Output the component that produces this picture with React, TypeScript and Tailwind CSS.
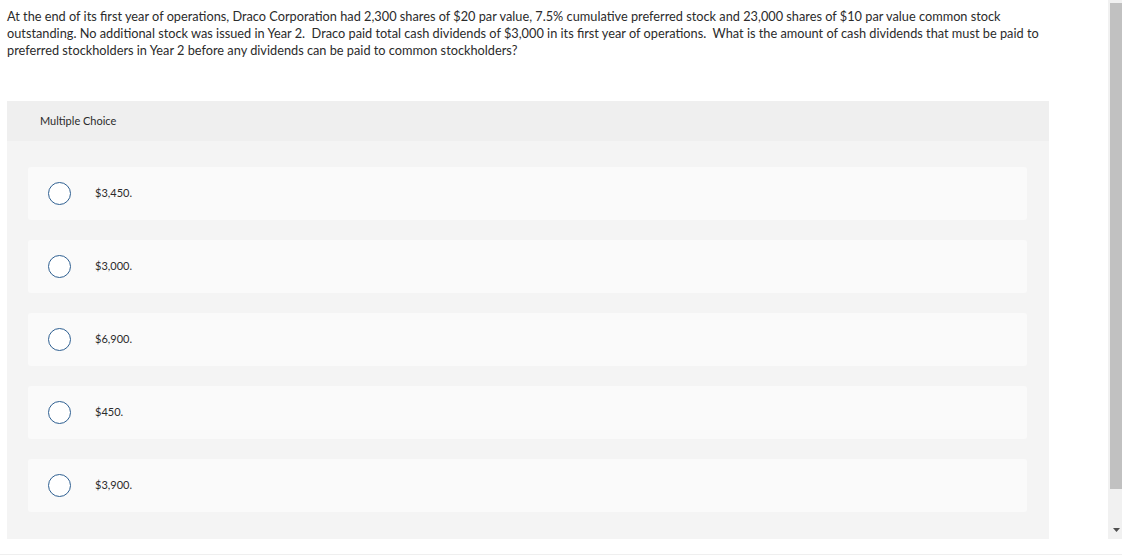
const options = ["$3,450.", "$3,000.", "$6,900.", "$450.", "$3,900."];

function Radio() {
  return <span className="block h-[23px] w-[23px] shrink-0 rounded-full border-[1.5px] border-[#2e5f91] bg-white" />;
}

export default function App() {
  return (
    <div className="h-[558px] w-[1122px] overflow-hidden bg-white font-['Lato','Liberation_Sans',sans-serif] text-[#2b2b2b]">
      <div className="flex h-[539px]">
        <main className="flex-1 pl-[7px] pt-[8px]">
          <p className="whitespace-nowrap text-[12.75px] leading-[17px]">
            At the end of its first year of operations, Draco Corporation had 2,300 shares of $20 par value, 7.5% cumulative preferred stock and 23,000 shares of $10 par value common stock
            <br />
            outstanding. No additional stock was issued in Year 2.&nbsp; Draco paid total cash dividends of $3,000 in its first year of operations.&nbsp; What is the amount of cash dividends that must be paid to
            <br />
            preferred stockholders in Year 2 before any dividends can be paid to common stockholders?
          </p>

          <section className="mt-[42px] w-[1042px]">
            <div className="flex h-[40px] items-center bg-[#efefef] pl-[33px] text-[11px]">Multiple Choice</div>
            <div className="flex flex-col gap-[20px] bg-[#f4f4f4] pb-[27px] pl-[21px] pr-[22px] pt-[26px]">
              {options.map((o) => (
                <div key={o} className="flex h-[53px] items-center rounded-[3px] bg-[#fafafa] pl-[20px]">
                  <Radio />
                  <span className="ml-[24px] text-[11px]">{o}</span>
                </div>
              ))}
            </div>
          </section>
        </main>

        {/* scrollbar */}
        <div className="flex w-[14px] flex-col bg-[#f1f1f1] pl-[2px] pt-[3px]">
          <div className="h-[486px] bg-[#c1c1c1]" />
          <div className="flex flex-1 items-end justify-center pb-[7px]">
            <svg width="7" height="4" viewBox="0 0 7 4">
              <path d="M0 0h7L3.5 4z" fill="#505050" />
            </svg>
          </div>
        </div>
      </div>
      <div className="mt-[15px] h-px bg-[#efefef]" />
    </div>
  );
}
